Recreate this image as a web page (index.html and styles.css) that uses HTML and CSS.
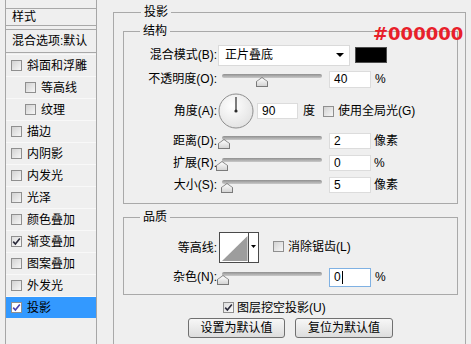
FILE: index.html
```html
<!DOCTYPE html>
<html lang="zh-CN">
<head>
<meta charset="utf-8">
<title>图层样式 - 投影</title>
<link rel="stylesheet" href="styles.css">
</head>
<body>
<div class="dialog">
  <aside class="sidebar">
    <div class="side-head">样式</div>
    <div class="side-blend">混合选项:默认</div>
    <ul class="fx-list">
      <li class="fx"><span class="cb"></span>斜面和浮雕</li>
      <li class="fx sub"><span class="cb"></span>等高线</li>
      <li class="fx sub"><span class="cb"></span>纹理</li>
      <li class="fx"><span class="cb"></span>描边</li>
      <li class="fx"><span class="cb"></span>内阴影</li>
      <li class="fx"><span class="cb"></span>内发光</li>
      <li class="fx"><span class="cb"></span>光泽</li>
      <li class="fx"><span class="cb"></span>颜色叠加</li>
      <li class="fx"><span class="cb checked"><svg viewBox="0 0 11 11" width="11" height="11"><path d="M2.2 5.6 L4.4 8 L8.8 2.6" fill="none" stroke="#2a2a3a" stroke-width="1.6"/></svg></span>渐变叠加</li>
      <li class="fx"><span class="cb"></span>图案叠加</li>
      <li class="fx"><span class="cb"></span>外发光</li>
      <li class="fx selected"><span class="cb checked white"><svg viewBox="0 0 11 11" width="11" height="11"><path d="M2.2 5.6 L4.4 8 L8.8 2.6" fill="none" stroke="#4b3fb0" stroke-width="1.6"/></svg></span>投影</li>
    </ul>
  </aside>

  <main class="main">
    <fieldset class="group outer">
      <legend>投影</legend>

      <fieldset class="group inner structure">
        <legend>结构</legend>

        <div class="row r-mode">
          <span class="lbl">混合模式(B):</span>
          <span class="select"><span>正片叠底</span><span class="arrow"></span></span>
          <span class="swatch"></span>
        </div>

        <div class="row r-opacity">
          <span class="lbl">不透明度(O):</span>
          <span class="slider"><span class="track"></span><span class="thumb" style="--v:0.4"></span></span>
          <span class="field">40</span>
          <span class="unit">%</span>
        </div>

        <div class="row r-angle">
          <span class="lbl">角度(A):</span>
          <svg class="dial" viewBox="0 0 36 36" width="36" height="36">
            <defs>
              <radialGradient id="dg" cx="0.4" cy="0.35" r="0.7">
                <stop offset="0" stop-color="#ffffff"/>
                <stop offset="1" stop-color="#e2e2e2"/>
              </radialGradient>
            </defs>
            <circle cx="18" cy="18" r="17" fill="url(#dg)" stroke="#8e8e8e" stroke-width="1"/>
            <line x1="18" y1="18" x2="18" y2="4" stroke="#3a3a3a" stroke-width="1.3"/>
            <circle cx="18" cy="18" r="1.6" fill="#2a2a2a"/>
          </svg>
          <span class="field f-angle">90</span>
          <span class="unit u-deg">度</span>
          <span class="cb cb-global"></span>
          <span class="cb-text">使用全局光(G)</span>
        </div>

        <div class="row r-slide first">
          <span class="lbl">距离(D):</span>
          <span class="slider"><span class="track"></span><span class="thumb" style="--v:0.02"></span></span>
          <span class="field f-narrow">2</span>
          <span class="unit u-tight">像素</span>
        </div>

        <div class="row r-slide">
          <span class="lbl">扩展(R):</span>
          <span class="slider"><span class="track"></span><span class="thumb" style="--v:0"></span></span>
          <span class="field f-narrow">0</span>
          <span class="unit u-tight">%</span>
        </div>

        <div class="row r-slide">
          <span class="lbl">大小(S):</span>
          <span class="slider"><span class="track"></span><span class="thumb" style="--v:0.05"></span></span>
          <span class="field f-narrow">5</span>
          <span class="unit u-tight">像素</span>
        </div>
      </fieldset>

      <fieldset class="group inner quality">
        <legend>品质</legend>

        <div class="row r-contour">
          <span class="lbl">等高线:</span>
          <svg class="contour" viewBox="0 0 40 31" width="40" height="31">
            <rect x="0.5" y="0.5" width="39" height="30" fill="#ffffff" stroke="#4a4a4a"/>
            <polygon points="3,29 28.5,4 28.5,29" fill="#9d9d9d"/>
            <line x1="29.5" y1="1" x2="29.5" y2="30" stroke="#4a4a4a"/>
            <polygon points="32,13 37,13 34.5,16" fill="#000000"/>
          </svg>
          <span class="cb cb-aa"></span>
          <span class="cb-text">消除锯齿(L)</span>
        </div>

        <div class="row r-noise">
          <span class="lbl">杂色(N):</span>
          <span class="slider"><span class="track"></span><span class="thumb" style="--v:0.01"></span></span>
          <span class="field focus">0<span class="caret"></span></span>
          <span class="unit">%</span>
        </div>
      </fieldset>

      <div class="knockout">
        <span class="cb checked"><svg viewBox="0 0 11 11" width="11" height="11"><path d="M2.2 5.6 L4.4 8 L8.8 2.6" fill="none" stroke="#2a2a3a" stroke-width="1.6"/></svg></span>
        <span class="cb-text">图层挖空投影(U)</span>
      </div>

      <div class="buttons">
        <button class="btn" type="button">设置为默认值</button>
        <button class="btn b2" type="button">复位为默认值</button>
      </div>
    </fieldset>

    <div class="annot">#000000</div>
  </main>
</div>
</body>
</html>
```
FILE: styles.css
```css
* { box-sizing: border-box; }

html, body {
  margin: 0;
  padding: 0;
}

body {
  width: 471px;
  height: 344px;
  overflow: hidden;
  background: #efefef;
  font-family: "Liberation Sans", "Noto Sans CJK SC", sans-serif;
  font-size: 12px;
  line-height: 14px;
  color: #000;
}

.dialog {
  display: flex;
  height: 344px;
  padding-left: 5px;
  overflow: hidden;
}

/* ---------- sidebar ---------- */
.sidebar {
  flex: none;
  width: 92px;
  border-left: 1px solid #a6a6a6;
  border-right: 1px solid #a6a6a6;
  padding-top: 8px;
}

.side-head {
  height: 18px;
  border-top: 1px solid #a8a8a8;
  border-bottom: 1px solid #a8a8a8;
  padding-left: 6px;
  line-height: 16px;
}

.side-blend {
  margin-top: 3px;
  height: 24px;
  border-top: 1px solid #a8a8a8;
  border-bottom: 1px solid #a8a8a8;
  padding-left: 6px;
  line-height: 22px;
  white-space: nowrap;
}

.fx-list {
  list-style: none;
  margin: 1px 0 0;
  padding: 0;
}

.fx {
  display: flex;
  align-items: center;
  height: 22px;
  border-top: 1px solid #f8f8f8;
  padding-left: 5px;
  white-space: nowrap;
}

.fx .cb { margin-right: 5px; }
.fx.sub { padding-left: 19px; }

.fx.selected {
  background: #3399ff;
  background-clip: padding-box;
}

/* ---------- checkbox ---------- */
.cb {
  display: inline-flex;
  flex: none;
  width: 11px;
  height: 11px;
  border: 1px solid #8f8f8f;
  background: linear-gradient(135deg, #d2d2d2, #f6f6f6);
  align-items: center;
  justify-content: center;
}

.cb svg {
  display: block;
  margin: -1px;
}

.cb.checked { background: linear-gradient(135deg, #dedede, #fafafa); }
.cb.white { background: #ffffff; }

.cb-text { white-space: nowrap; }

/* ---------- main ---------- */
.main {
  position: relative;
  flex: 1;
  margin-left: 16px;
  padding-right: 5px;
  padding-top: 5px;
}

.group {
  margin: 0;
  min-width: 0;
  border: 1px solid #a9a9a9;
}

.group legend {
  font-size: 12px;
  line-height: 14px;
  padding: 0 3px;
}

.outer {
  height: 400px;
  padding: 5px 7px 0 9px;
}

.outer > legend { margin-left: 18px; }

.inner {
  padding: 6px 0 7px 0;
}

.inner > legend { margin-left: 16px; }

.quality {
  margin-top: 6px;
  padding-top: 8px;
  padding-bottom: 6px;
}

.row {
  display: flex;
  align-items: center;
  white-space: nowrap;
}

.lbl {
  flex: none;
  width: 93px;
  text-align: right;
}

.r-mode { height: 22px; }
.r-opacity { height: 20px; margin-top: 3px; }
.r-angle { height: 36px; margin-top: 4px; }
.r-slide { height: 22px; }
.r-slide.first { margin-top: 1px; }
.r-contour { height: 32px; align-items: flex-start; }
.r-contour .lbl { margin-top: 9px; }
.r-contour .cb { margin-top: 9px; }
.r-contour .cb-text { margin-top: 8px; }
.r-noise { height: 22px; margin-top: 2px; }

/* dropdown */
.select {
  display: flex;
  align-items: center;
  justify-content: space-between;
  margin-left: 1px;
  width: 132px;
  height: 21px;
  background: #ffffff;
  border: 1px solid #dadada;
  padding: 0 5px 0 6px;
}

.arrow {
  width: 0;
  height: 0;
  border-left: 4px solid transparent;
  border-right: 4px solid transparent;
  border-top: 4px solid #000;
}

.swatch {
  margin-left: 5px;
  width: 32px;
  height: 16px;
  background: #000;
  border: 1px solid #4d4d4d;
}

/* slider */
.slider {
  position: relative;
  flex: none;
  width: 106px;
  height: 16px;
  margin-left: 2px;
}

.track {
  position: absolute;
  left: 3px;
  right: 3px;
  top: 3px;
  height: 4px;
  border-radius: 2px;
  background: linear-gradient(#8f8f8f, #c9c9c9);
}

.thumb {
  position: absolute;
  top: 6px;
  left: calc(3px + var(--v) * 100px - 6px);
  width: 12px;
  height: 10px;
  background: #7a7a7a;
  clip-path: polygon(50% 0, 100% 45%, 100% 100%, 0 100%, 0 45%);
}

.thumb::after {
  content: "";
  position: absolute;
  left: 1px;
  top: 1px;
  right: 1px;
  bottom: 1px;
  background: linear-gradient(#ffffff, #d4d4d4);
  clip-path: polygon(50% 0, 100% 45%, 100% 100%, 0 100%, 0 45%);
}

/* fields */
.field {
  display: inline-flex;
  align-items: center;
  flex: none;
  margin-left: 4px;
  width: 42px;
  height: 17px;
  background: #ffffff;
  border: 1px solid #dcdcdc;
  padding-left: 4px;
}

.f-narrow { height: 16px; }

.f-angle {
  margin-left: 3px;
  width: 41px;
  height: 16px;
}

.field.focus {
  height: 19px;
  border-color: #7fb1e3;
}

.caret {
  display: inline-block;
  width: 1px;
  height: 13px;
  margin-left: 1px;
  background: #000;
}

.unit { margin-left: 4px; }
.u-tight { margin-left: 3px; }
.u-deg { margin-left: 5px; }

.dial {
  flex: none;
  margin-left: 1px;
}

.cb-global { margin-left: 8px; margin-right: 4px; }

.contour {
  flex: none;
  margin-left: 2px;
}

.cb-aa { margin-left: 14px; margin-right: 4px; }

/* knockout + buttons */
.knockout {
  display: flex;
  align-items: center;
  gap: 3px;
  height: 15px;
  margin-top: 5px;
  margin-left: 100px;
}

.buttons {
  display: flex;
  justify-content: center;
  gap: 10px;
  margin-top: 3px;
}

.btn {
  width: 97px;
  height: 20px;
  padding: 0;
  border: 1px solid #707070;
  border-radius: 3px;
  background: linear-gradient(#f7f7f7, #dddddd);
  font-family: "Liberation Sans", "Noto Sans CJK SC", sans-serif;
  font-size: 12px;
  line-height: 14px;
  color: #000;
}

.btn.b2 { width: 98px; }

/* annotation overlay */
.annot {
  position: absolute;
  left: 260px;
  top: 25px;
  font-family: "DejaVu Sans", sans-serif;
  font-weight: bold;
  font-size: 18px;
  line-height: 18px;
  color: #e8202a;
}
```
